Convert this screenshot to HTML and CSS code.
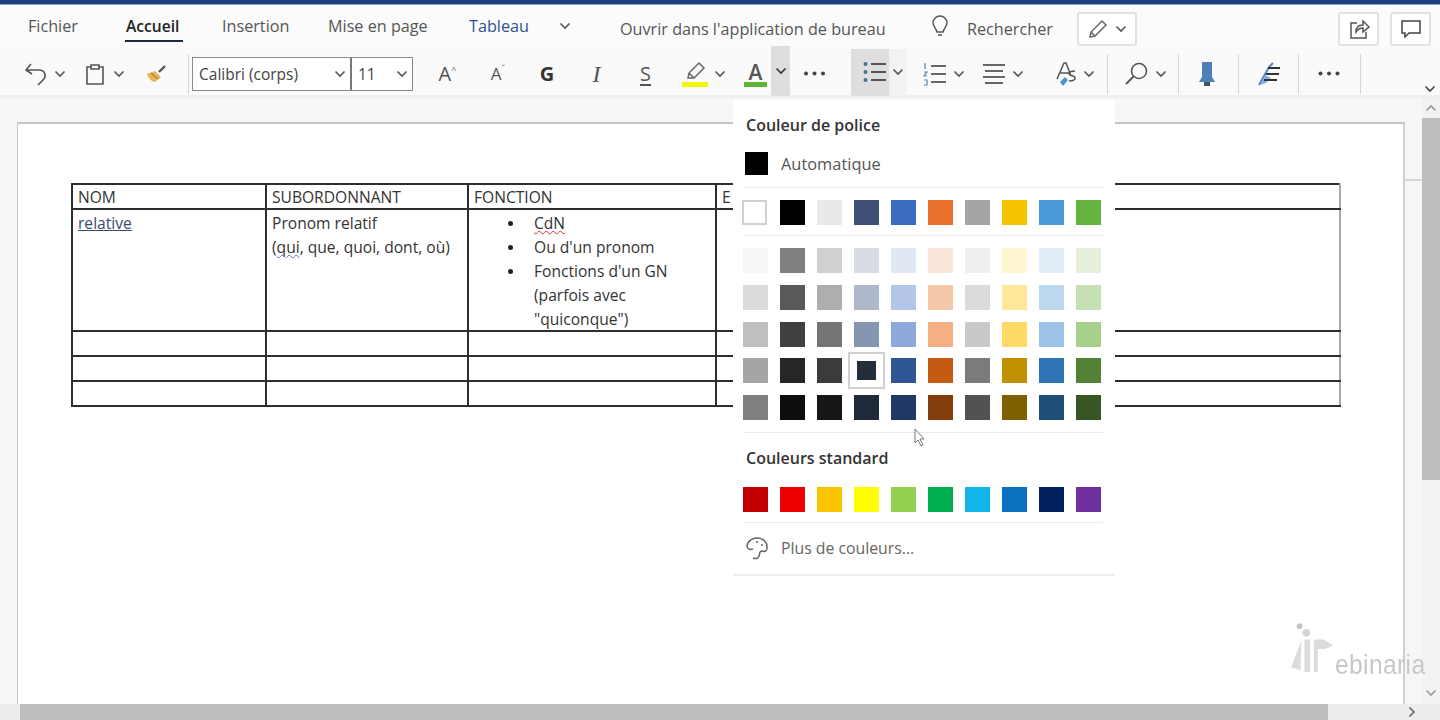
FILE: index.html
```html
<!DOCTYPE html>
<html lang="fr">
<head>
<meta charset="utf-8">
<title>Word</title>
<link rel="stylesheet" href="styles.css">
</head>
<body>
<svg class="defs" width="0" height="0"><symbol id="chev" viewBox="0 0 12 12"><polyline points="1.5,3.5 6,8 10.5,3.5" fill="none" stroke="currentColor" stroke-width="1.6"/></symbol><symbol id="dots" viewBox="0 0 23 5"><g fill="currentColor"><circle cx="3" cy="2.5" r="2"/><circle cx="11.5" cy="2.5" r="2"/><circle cx="20" cy="2.5" r="2"/></g></symbol></svg>
<div class="app">
  <div class="topbar"></div>
  <div class="tabs">
    <span class="tab t-fichier">Fichier</span>
    <span class="tab active t-accueil">Accueil</span>
    <span class="tab t-insertion">Insertion</span>
    <span class="tab t-mise">Mise en page</span>
    <span class="tab tableau t-tableau">Tableau</span>
    <svg class="chev ml-30" viewBox="0 0 12 12"><use href="#chev"/></svg>
    <span class="tab low t-ouvrir">Ouvrir dans l'application de bureau</span>
    <svg class="ico t-bulb" width="20" height="24" viewBox="0 0 20 24"><path d="M3 8a7 7 0 0 1 14 0c0 3-3 5-4 9H7C6 13 3 11 3 8zM8 20h4" fill="none" stroke="#555" stroke-width="1.5"/></svg>
    <span class="tab low t-recherche">Rechercher</span>
    <div class="boxbtn t-pencil">
      <svg width="22" height="20" viewBox="0 0 22 20"><path d="M3 18l1-5L15 2l4 4L8 17zM4 13l4 4" fill="none" stroke="#666" stroke-width="1.5"/></svg>
      <svg class="chev" viewBox="0 0 12 12"><use href="#chev"/></svg>
    </div>
    <div class="boxbtn square t-share">
      <svg width="22" height="22" viewBox="0 0 22 22"><path d="M9 5H3v15h15v-6M8 14c0-5 3-7 7-7V3l6 6-6 5v-4c-3 0-5 1-7 4z" fill="none" stroke="#555" stroke-width="1.5"/></svg>
    </div>
    <div class="boxbtn square t-comment">
      <svg width="22" height="22" viewBox="0 0 22 22"><path d="M2 3h18v12H9l-4 4v-4H2z" fill="none" stroke="#444" stroke-width="1.5"/></svg>
    </div>
  </div>
  <div class="ribbon">
    <svg class="ico ml-24" width="24" height="24" viewBox="0 0 24 24"><path d="M7 2L2 8l6 4M2 8h13c6 0 8 6 4 10l-5 5" fill="none" stroke="#555" stroke-width="1.6"/></svg>
    <svg class="chev ml-6" viewBox="0 0 12 12"><use href="#chev"/></svg>
    <svg class="ico ml-19" width="22" height="24" viewBox="0 0 22 24"><path d="M6 5H2v17h16V5h-4M6 3h8v4H6z" fill="none" stroke="#555" stroke-width="1.6"/></svg>
    <svg class="chev ml-6" viewBox="0 0 12 12"><use href="#chev"/></svg>
    <svg class="ico ml-21" width="22" height="20" viewBox="0 0 22 20"><path d="M1 10l8-3 6 6-6 5c-3 0-7-4-8-8z" fill="#e8b45a"/><path d="M13 8l6-6" stroke="#555" stroke-width="2.4"/><path d="M5 9l7 6" stroke="#b97f2a" stroke-width="1.2"/></svg>
    <span class="sep ml-20"></span>
    <div class="fontbox ml-3">
      <div class="fname"><span>Calibri (corps)</span><svg class="chev" viewBox="0 0 12 12"><use href="#chev"/></svg></div>
      <div class="fsize"><span>11</span><svg class="chev" viewBox="0 0 12 12"><use href="#chev"/></svg></div>
    </div>
    <span class="glyph w21 ml-24">A<sup>^</sup></span>
    <span class="glyph small w20 ml-30">A<sup>ˇ</sup></span>
    <span class="glyph bold w18 ml-30">G</span>
    <span class="glyph ital w17 ml-32">I</span>
    <span class="glyph under w17 ml-32">S</span>
    <svg class="ico ml-28" width="26" height="30" viewBox="0 0 26 30"><path d="M6 19l1-5L17 4l5 5-10 10zM7 14l5 5" fill="none" stroke="#666" stroke-width="1.5"/><rect x="0" y="23" width="26" height="5" fill="#f5f50c"/></svg>
    <svg class="chev ml-6" viewBox="0 0 12 12"><use href="#chev"/></svg>
    <div class="colorA ml-18"><span>A</span><i></i></div>
    <div class="hot ml-4"><svg class="chev" viewBox="0 0 12 12"><use href="#chev"/></svg></div>
    <svg class="dots ml-13" viewBox="0 0 23 5"><use href="#dots"/></svg>
    <div class="listbox ml-25">
      <div class="listhot"><svg width="24" height="24" viewBox="0 0 24 24"><g fill="#4a6f9c"><circle cx="2.5" cy="4" r="2"/><circle cx="2.5" cy="12" r="2"/><circle cx="2.5" cy="20" r="2"/></g><path d="M8 4h15M8 12h15M8 20h15" stroke="#555" stroke-width="2"/></svg></div>
      <div class="listside"><svg class="chev" viewBox="0 0 12 12"><use href="#chev"/></svg></div>
    </div>
    <svg class="ico ml-16" width="23" height="24" viewBox="0 0 23 24"><path d="M2 1v6M1 10h3l-3 4h3M1 18h3v5H1" fill="none" stroke="#5b86b5" stroke-width="1.2"/><path d="M8 4h15M8 12h15M8 20h15" stroke="#666" stroke-width="2"/></svg>
    <svg class="chev ml-7" viewBox="0 0 12 12"><use href="#chev"/></svg>
    <svg class="ico ml-18" width="22" height="24" viewBox="0 0 22 24"><path d="M0 3h22M2 9h18M0 15h22M2 21h18" stroke="#666" stroke-width="2"/></svg>
    <svg class="chev ml-7" viewBox="0 0 12 12"><use href="#chev"/></svg>
    <svg class="ico ml-31" width="22" height="26" viewBox="0 0 22 26"><path d="M2 18L9 2h2l5 13M5 12h9M20 10c-4 0-6 1-6 3s6 1 6 4-3 3-6 3" fill="none" stroke="#555" stroke-width="1.5"/><path d="M5 21l5-5 3 3-5 6z" fill="#3d9ad6"/></svg>
    <svg class="chev ml-6" viewBox="0 0 12 12"><use href="#chev"/></svg>
    <span class="sep ml-12"></span>
    <svg class="ico ml-17" width="23" height="24" viewBox="0 0 23 24"><circle cx="14" cy="9" r="7.5" fill="none" stroke="#555" stroke-width="1.6"/><path d="M8.5 14.5L1 22" stroke="#555" stroke-width="1.8"/></svg>
    <svg class="chev ml-7" viewBox="0 0 12 12"><use href="#chev"/></svg>
    <span class="sep ml-11"></span>
    <svg class="ico ml-19" width="18" height="26" viewBox="0 0 18 26"><path d="M4 1h10v15l3 5H1l3-5z" fill="#4f7fb8"/><rect x="6" y="21" width="6" height="4" fill="#44525f"/></svg>
    <span class="sep ml-22"></span>
    <svg class="ico ml-18" width="24" height="26" viewBox="0 0 24 26"><path d="M2 24L12 6l4-4" fill="none" stroke="#4f87c4" stroke-width="2"/><path d="M3 24l5-10 6 3-5 5z" fill="#7fb0df"/><path d="M11 7h12M9 13h13M7 19h13" stroke="#333" stroke-width="2"/></svg>
    <span class="sep ml-17"></span>
    <svg class="dots wide ml-18" viewBox="0 0 23 5"><use href="#dots"/></svg>
    <span class="sep ml-19"></span>
    <svg class="chev collapse" viewBox="0 0 12 12"><use href="#chev"/></svg>
  </div>
  <div class="workspace">
    <div class="canvas">
      <div class="page">
        <table class="doc">
          <colgroup><col class="c1"><col class="c2"><col class="c3"><col></colgroup>
          <tr class="r-head"><td>NOM</td><td>SUBORDONNANT</td><td>FONCTION</td><td>E</td></tr>
          <tr class="r-main">
            <td><span class="link">relative</span></td>
            <td>Pronom relatif<br>(<span class="gram">qui</span>, que, quoi, dont, où)</td>
            <td><ul><li><span class="spell">CdN</span></li><li>Ou d'un pronom</li><li>Fonctions d'un GN<br>(parfois avec<br>"quiconque")</li></ul></td>
            <td></td>
          </tr>
          <tr class="r-row"><td></td><td></td><td></td><td></td></tr>
          <tr class="r-row"><td></td><td></td><td></td><td></td></tr>
          <tr class="r-row"><td></td><td></td><td></td><td></td></tr>
        </table>
      </div>
      <span class="gutter-tick"></span>
    </div>
    <div class="vscroll">
      <svg class="arrow up" viewBox="0 0 12 12"><use href="#chev"/></svg>
      <div class="vthumb"></div>
      <svg class="arrow down" viewBox="0 0 12 12"><use href="#chev"/></svg>
    </div>
  </div>
  <div class="hscroll"><div class="hthumb"></div><svg class="arrow right" viewBox="0 0 12 12"><use href="#chev"/></svg></div>

  <div class="menu">
    <div class="m-title">Couleur de police</div>
    <div class="m-auto"><span class="m-autoswatch"></span><span>Automatique</span></div>
    <hr class="m-sep s1">
    <div class="grid">
      <span class="sw white"></span><span class="sw" style="background:#000"></span><span class="sw" style="background:#e9e9e9"></span><span class="sw" style="background:#3f4f75"></span><span class="sw" style="background:#3a6cc0"></span><span class="sw" style="background:#e8702a"></span><span class="sw" style="background:#a5a5a5"></span><span class="sw" style="background:#f5c400"></span><span class="sw" style="background:#4a98d6"></span><span class="sw" style="background:#62b33f"></span>
    </div>
    <hr class="m-sep s2">
    <div class="grid">
      <span class="sw" style="background:#f6f6f6"></span><span class="sw" style="background:#7f7f7f"></span><span class="sw" style="background:#d0d0d0"></span><span class="sw" style="background:#d9dce5"></span><span class="sw" style="background:#dfe8f3"></span><span class="sw" style="background:#fbe5d9"></span><span class="sw" style="background:#efefef"></span><span class="sw" style="background:#fff6cf"></span><span class="sw" style="background:#e0edf6"></span><span class="sw" style="background:#e4efdc"></span>
      <span class="sw" style="background:#dbdbdb"></span><span class="sw" style="background:#595959"></span><span class="sw" style="background:#aeaeae"></span><span class="sw" style="background:#adb9ca"></span><span class="sw" style="background:#b4c6e7"></span><span class="sw" style="background:#f4c7a8"></span><span class="sw" style="background:#dbdbdb"></span><span class="sw" style="background:#ffe699"></span><span class="sw" style="background:#bdd7ee"></span><span class="sw" style="background:#c5e0b3"></span>
      <span class="sw" style="background:#bfbfbf"></span><span class="sw" style="background:#404040"></span><span class="sw" style="background:#757575"></span><span class="sw" style="background:#8496b0"></span><span class="sw" style="background:#8eaadb"></span><span class="sw" style="background:#f4b083"></span><span class="sw" style="background:#c9c9c9"></span><span class="sw" style="background:#ffd966"></span><span class="sw" style="background:#9cc3e5"></span><span class="sw" style="background:#a8d08d"></span>
      <span class="sw" style="background:#a5a5a5"></span><span class="sw" style="background:#262626"></span><span class="sw" style="background:#3b3b3b"></span><span class="sw selected" style="background:#222f3b"></span><span class="sw" style="background:#2f5597"></span><span class="sw" style="background:#c55a11"></span><span class="sw" style="background:#7b7b7b"></span><span class="sw" style="background:#bf9000"></span><span class="sw" style="background:#2e75b5"></span><span class="sw" style="background:#538135"></span>
      <span class="sw" style="background:#7f7f7f"></span><span class="sw" style="background:#0d0d0d"></span><span class="sw" style="background:#161616"></span><span class="sw" style="background:#1f2937"></span><span class="sw" style="background:#1f3864"></span><span class="sw" style="background:#833c0b"></span><span class="sw" style="background:#525252"></span><span class="sw" style="background:#7f6000"></span><span class="sw" style="background:#1f4e79"></span><span class="sw" style="background:#375623"></span>
    </div>
    <hr class="m-sep s3">
    <div class="m-title std">Couleurs standard</div>
    <div class="grid stdgrid">
      <span class="sw" style="background:#c00000"></span><span class="sw" style="background:#ee0000"></span><span class="sw" style="background:#f8c400"></span><span class="sw" style="background:#ffff00"></span><span class="sw" style="background:#92d050"></span><span class="sw" style="background:#00b050"></span><span class="sw" style="background:#12b5ea"></span><span class="sw" style="background:#0a70c0"></span><span class="sw" style="background:#002060"></span><span class="sw" style="background:#7030a0"></span>
    </div>
    <hr class="m-sep s4">
    <div class="m-more">
      <svg width="24" height="24" viewBox="0 0 24 24"><path d="M2 10a10 9 0 0 1 20 2c0 3-2 4-5 3-3 0-2 3-3 5-1 3-4 3-6 2M2 10c0 3 3 4 6 3" fill="none" stroke="#666" stroke-width="1.5"/><circle cx="12" cy="6" r="1" fill="#666"/><circle cx="17" cy="9" r="1" fill="#666"/></svg>
      <span>Plus de couleurs...</span>
    </div>
  </div>

  <svg class="cursor" width="11" height="19" viewBox="0 0 11 19"><path d="M1 1v14l3-3 3 6 2-1-3-6h4z" fill="#fff" stroke="#777" stroke-width="1"/></svg>

  <div class="watermark">
    <svg width="44" height="62" viewBox="0 0 46 62"><circle cx="9" cy="5" r="3" fill="#c4c4c4"/><circle cx="16" cy="12" r="4" fill="#d4d4d4"/><path d="M11 20l-11 28 10 3zM14 19h6v34h-6zM24 19h10l10 6-8 4h-8v24h-4z" fill="#dcdcdc"/></svg>
    <span>ebinaria</span>
  </div>
</div>
</body>
</html>
```
FILE: styles.css
```css
* { box-sizing: border-box; }
html, body { margin: 0; height: 720px; overflow: hidden; background: #fff; }
body { font-family: "Open Sans", "Liberation Sans", sans-serif; color: #333; }
.defs { position: absolute; }
.app { position: relative; display: flex; flex-direction: column; width: 1440px; height: 720px; overflow: hidden; filter: blur(.7px); }

.topbar { height: 5px; flex: none; background: #1c3f80; border-bottom: 1px solid #8ea6cf; }

.tabs { display: flex; align-items: center; height: 41px; flex: none; background: #fbfbfb; font-size: 16.2px; color: #555; position: relative; }
.tab { white-space: nowrap; line-height: 20px; }
.tab.low { margin-top: 6px; }
.active { color: #222; font-weight: 600; font-size: 15.6px; position: relative; }
.active::after { content: ""; position: absolute; left: -1px; right: -2px; top: 24px; height: 2px; background: #1b2a40; }
.tableau { color: #2f4f8f; }
.t-fichier { margin-left: 28px; width: 51px; }
.t-accueil { margin-left: 47px; width: 55px; }
.t-insertion { margin-left: 41px; width: 66px; }
.t-mise { margin-left: 40px; width: 103px; }
.t-tableau { margin-left: 38px; width: 60px; }
.t-ouvrir { margin-left: 49px; width: 268px; }
.t-bulb { margin-left: 42px; margin-top: 3px; }
.t-recherche { margin-left: 17px; width: 85px; }
.t-pencil { margin-left: 25px; width: 60px; }
.t-share { margin-left: 201px; }
.t-comment { margin-left: 11px; }
.boxbtn { display: flex; align-items: center; justify-content: center; gap: 6px; height: 34px; margin-top: 6px; background: #fff; border: 2px solid #e2e2e2; border-radius: 3px; }
.boxbtn.square { width: 41px; }

.chev { width: 12px; height: 12px; flex: none; color: #555; display: block; }
.ico { flex: none; display: block; }

.ribbon { display: flex; align-items: center; height: 52px; padding-top: 6px; flex: none; background: #fafafa; position: relative; border-bottom: 3px solid #efefef; }
.sep { width: 1px; height: 40px; flex: none; background: #d6d6d6; }
.ml-3 { margin-left: 3px; } .ml-4 { margin-left: 4px; } .ml-6 { margin-left: 6px; } .ml-7 { margin-left: 7px; }
.ml-11 { margin-left: 11px; } .ml-12 { margin-left: 12px; } .ml-13 { margin-left: 13px; } .ml-16 { margin-left: 16px; }
.ml-17 { margin-left: 17px; } .ml-18 { margin-left: 18px; } .ml-19 { margin-left: 19px; } .ml-20 { margin-left: 20px; }
.ml-21 { margin-left: 21px; } .ml-22 { margin-left: 22px; } .ml-24 { margin-left: 24px; } .ml-25 { margin-left: 25px; }
.ml-28 { margin-left: 28px; } .ml-30 { margin-left: 30px; } .ml-31 { margin-left: 31px; } .ml-32 { margin-left: 32px; }

.fontbox { display: flex; width: 221px; height: 34px; flex: none; background: #fff; border: 1px solid #8a8a8a; font-size: 15.5px; color: #444; }
.fname { display: flex; align-items: center; justify-content: space-between; width: 159px; padding: 0 4px 0 6px; border-right: 2px solid #777; }
.fsize { display: flex; align-items: center; justify-content: space-between; flex: 1; padding: 0 4px 0 6px; }

.glyph { flex: none; display: block; text-align: center; font-size: 20px; line-height: 24px; color: #555; white-space: nowrap; }
.glyph sup { font-size: 9px; line-height: 0; vertical-align: 8px; }
.glyph.small { font-size: 17px; }
.glyph.bold { font-weight: 700; color: #333; font-size: 20px; }
.glyph.ital { font-family: "Liberation Serif", serif; font-style: italic; font-size: 24px; }
.glyph.under { text-decoration: underline; text-underline-offset: 3px; font-size: 20px; }
.w17 { width: 17px; } .w18 { width: 18px; } .w20 { width: 20px; } .w21 { width: 21px; }

.colorA { display: flex; flex-direction: column; align-items: center; width: 23px; flex: none; font-size: 21px; line-height: 24px; font-weight: 600; color: #555; margin-top: 0; }
.colorA i { display: block; width: 100%; height: 5px; background: #5cb531; margin-top: -2px; }
.hot { display: flex; align-items: center; justify-content: center; width: 19px; height: 50px; flex: none; background: #dedede; margin-top: -5px; }
.hot .chev { color: #333; }
.dots { flex: none; width: 23px; height: 5px; color: #444; display: block; }
.dots.wide { width: 24px; }
.listbox { display: flex; height: 47px; flex: none; margin-top: -3px; }
.listhot { display: flex; align-items: center; justify-content: flex-end; width: 38px; padding-right: 2px; background: #dedede; }
.listside { display: flex; align-items: center; justify-content: center; width: 18px; background: #f2f2f2; }
.collapse { position: absolute; right: 4px; bottom: 0; color: #444; }

.workspace { display: flex; flex: 1; min-height: 0; }
.canvas { position: relative; flex: 1; min-width: 0; background: #f6f6f6; padding: 24px 17px 0; }
.page { height: 100%; background: #fff; border-top: 2px solid #c6c6c6; border-left: 1px solid #ccc; border-right: 2px solid #cfcfcf; padding: 59px 0 0 53px; }
.gutter-tick { position: absolute; right: 0; top: 81px; width: 17px; height: 2px; background: #d6d6d6; }

.doc { border-collapse: collapse; table-layout: fixed; width: 1270px; font-size: 15.6px; line-height: 24px; color: #333; }
.doc td { border: 2px solid #2e2e2e; padding: 0 5px; vertical-align: top; overflow: hidden; white-space: nowrap; }
.doc td:last-child { border-right-color: #aaa; }
.c1 { width: 194px; } .c2 { width: 202px; } .c3 { width: 248px; }
.r-head { height: 25px; } .r-main { height: 122px; } .r-row { height: 25px; }
.r-head td { padding-top: 2px; line-height: 21px; }
.r-main td { padding-top: 1px; line-height: 24px; }
.doc ul { margin: 0 0 -1px; padding: 0 0 0 60px; list-style: none; }
.doc li { position: relative; }
.doc li::before { content: ""; position: absolute; left: -26px; top: 10px; width: 5px; height: 5px; border-radius: 50%; background: #222; }
.link { color: #3a4a6a; text-decoration: underline; }
.gram { text-decoration: underline wavy #5a6fc0 1px; }
.spell { text-decoration: underline wavy #d8303a 1px; }

.vscroll { position: relative; width: 18px; flex: none; background: #f2f2f2; }
.vthumb { position: absolute; left: 0; right: 0; top: 20px; height: 362px; background: #bdbdbd; }
.arrow { position: absolute; width: 12px; height: 12px; color: #999; }
.arrow.up { left: 3px; top: 4px; transform: rotate(180deg); }
.arrow.down { left: 3px; bottom: 5px; }
.hscroll { position: relative; height: 16px; flex: none; background: #ececec; }
.hthumb { position: absolute; left: 20px; top: 0; bottom: 0; width: 1308px; background: #bdbdbd; }
.arrow.right { right: 22px; top: 2px; transform: rotate(-90deg); color: #666; }

.menu { position: absolute; left: 733px; top: 100px; width: 382px; height: 476px; background: #fff; border-bottom: 2px solid #ececec; padding: 0 12px 0 10px; }
.m-title { margin: 14px 0 0 3px; font-size: 16px; line-height: 22px; font-weight: 600; color: #333; }
.m-auto { display: flex; align-items: center; gap: 13px; margin: 16px 0 0 2px; font-size: 16.4px; color: #555; height: 23px; }
.m-autoswatch { width: 23px; height: 23px; background: #000; }
.m-sep { border: 0; border-top: 1px solid #eaeaea; margin: 0; }
.s1 { margin-top: 12px; }
.s2 { margin-top: 10px; }
.s3 { margin-top: 12px; }
.s4 { margin-top: 10px; }
.grid { display: grid; grid-template-columns: repeat(10, 25px); gap: 11.75px 12px; margin-top: 12px; }
.sw { display: block; width: 25px; height: 25px; position: relative; }
.white { background: #fff; border: 2px solid #d0d0d0; margin-left: -1px; }
.selected { box-shadow: inset 0 0 0 3px #fff; outline: 2px solid #d0d0d0; outline-offset: 4px; }
.std { margin-top: 14px; }
.stdgrid { margin-top: 18px; }
.m-more { display: flex; align-items: center; gap: 12px; margin: 13px 0 0 2px; font-size: 15.8px; color: #666; height: 24px; }
.cursor { position: absolute; left: 914px; top: 428px; }

.watermark { position: absolute; left: 1291px; top: 620px; display: flex; align-items: flex-end; color: #c8c8c8; }
.watermark span { font-family: "Liberation Sans", sans-serif; font-size: 28px; line-height: 30px; letter-spacing: .4px; margin-bottom: 2px; transform: scaleX(.88); transform-origin: left bottom; }
```
